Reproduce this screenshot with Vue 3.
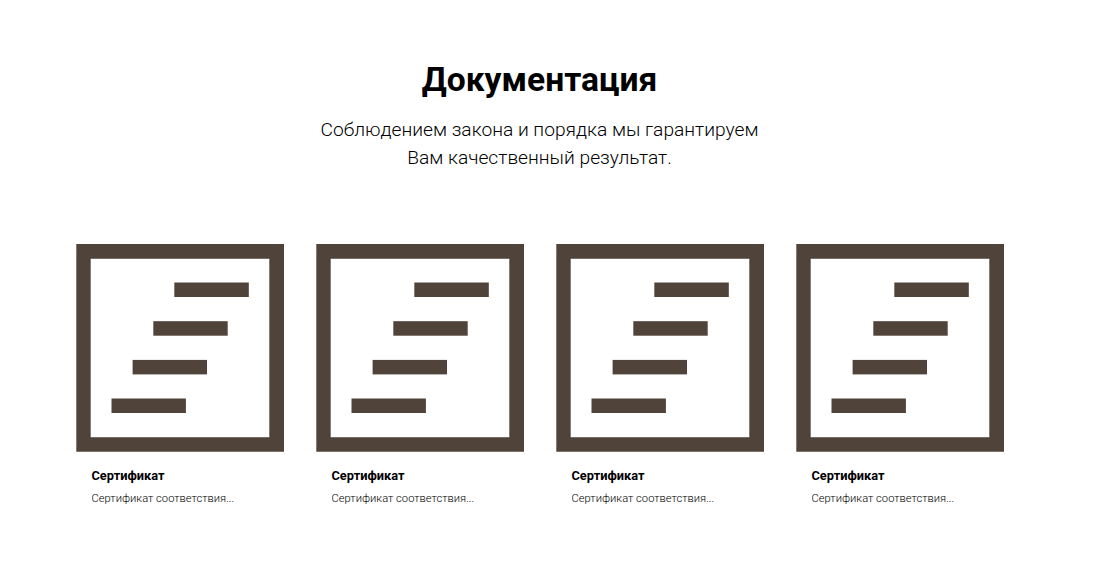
<script setup>
const cards = Array.from({ length: 4 }, () => ({
  title: 'Сертификат',
  text: 'Сертификат соответствия...',
}))
</script>

<template>
  <section class="docs">
    <h2>Документация</h2>
    <p class="lead">Соблюдением закона и порядка мы гарантируем<br />Вам качественный результат.</p>
    <div class="cards">
      <article v-for="(card, i) in cards" :key="i" class="card">
        <svg class="pic" viewBox="0 0 208 208" fill="#50433a">
          <path fill-rule="evenodd" d="M.3 0H208V207.7H.3ZM14.7 14.7V193.3H193.3V14.7Z" />
          <rect x="98.3" y="38.5" width="74.5" height="14.5" />
          <rect x="77.3" y="77.2" width="74.4" height="14.5" />
          <rect x="56.6" y="115.9" width="74.4" height="14.5" />
          <rect x="35.5" y="154.5" width="74.4" height="14.5" />
        </svg>
        <h3>{{ card.title }}</h3>
        <p>{{ card.text }}</p>
      </article>
    </div>
  </section>
</template>

<style scoped>
.docs {
  box-sizing: border-box;
  width: 1079px;
  height: 571px;
  padding-top: 59px;
  font-family: Roboto, sans-serif;
  color: #000;
}
h2 {
  margin: 0;
  font-size: 33.6px;
  line-height: 42px;
  font-weight: 700;
  text-align: center;
}
.lead {
  margin: 15px 0 0;
  font-size: 19.2px;
  line-height: 28px;
  font-weight: 300;
  text-align: center;
}
.cards {
  display: flex;
  gap: 32px;
  margin: 72px 0 0 76px;
}
.card {
  width: 208px;
}
.pic {
  display: block;
  width: 208px;
  height: 208px;
}
h3 {
  margin: 15px 0 0 15.5px;
  font-size: 12.8px;
  line-height: 18px;
  font-weight: 700;
}
.card p {
  margin: 5px 0 0 15.5px;
  font-size: 11.2px;
  line-height: 17px;
  font-weight: 300;
}
</style>

<style>
body {
  background: #fff;
}
</style>
